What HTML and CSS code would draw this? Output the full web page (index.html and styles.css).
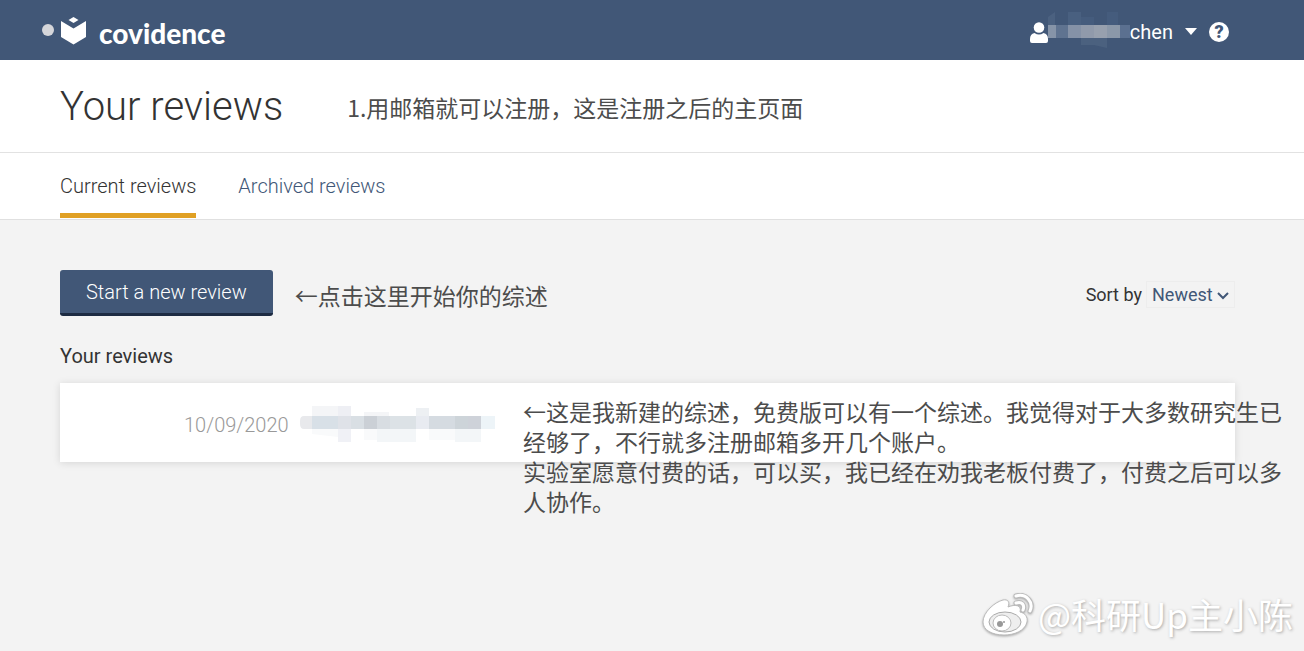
FILE: index.html
```html
<!DOCTYPE html>
<html lang="zh-CN">
<head>
    <meta charset="utf-8">
    <title>Covidence - Your reviews</title>
    <link rel="stylesheet" href="styles.css">
</head>
<body>
    <header class="topbar">
        <a class="brand" href="#">
            <span class="brand-dot"></span>
            <svg class="brand-mark" viewBox="0 0 25 28" width="25" height="28" aria-hidden="true">
                <path d="M12.500 0L17.500 3L12.500 6L7.500 3Z"/>
                <path d="M0 4L12.500 11.500L25 4V20L12.500 27.500L0 20Z"/>
            </svg>
            <span class="brand-name">covidence</span>
        </a>
        <div class="account">
            <button class="account-menu" type="button">
                <svg class="user-icon" viewBox="0 0 18 21" width="18" height="21" aria-hidden="true">
                    <circle cx="9" cy="5.500" r="5.300"/>
                    <path d="M4.500 11Q9 14 13.500 11Q18 12 18 17V19Q18 21 16 21H2Q0 21 0 19V17Q0 12 4.500 11Z"/>
                </svg>
                <svg class="name-mask" viewBox="0 0 82 36" width="82" height="36" aria-hidden="true">
                    <path d="M0 5L7 0V13H0Z" fill="#4b6180"/>
                    <path d="M20 0H33V13H20Z" fill="#496080"/>
                    <path d="M33 5H46V13H33ZM59 0H70V13H59Z" fill="#455c7d"/>
                    <path d="M0 13H8V26H0Z" fill="#8694a8"/>
                    <path d="M8 13H20V26H8Z" fill="#5f7390"/>
                    <path d="M20 13H33V26H20Z" fill="#8592a7"/>
                    <path d="M33 13H46V26H33Z" fill="#909aab"/>
                    <path d="M46 13H59V26H46Z" fill="#97a0ae"/>
                    <path d="M59 13H72V26H59Z" fill="#8b98a9"/>
                    <path d="M72 13H82V26H72Z" fill="#5b7090"/>
                    <path d="M33 26H46V33H33ZM46 26H59V36L46 33Z" fill="#4b617f"/>
                </svg>
                <span>chen</span>
                <svg class="caret" viewBox="0 0 12 8" width="12" height="8" aria-hidden="true"><path d="M0 0H12L6 7Z"/></svg>
            </button>
            <button class="help" type="button" aria-label="Help">?</button>
        </div>
    </header>

    <div class="page-title">
        <h1>Your reviews</h1>
        <p class="note">1.用邮箱就可以注册，这是注册之后的主页面</p>
    </div>

    <nav class="tabs">
        <a class="tab active" href="#">Current reviews</a>
        <a class="tab" href="#">Archived reviews</a>
    </nav>

    <main class="content">
        <div class="toolbar">
            <button class="start-button" type="button">Start a new review</button>
            <p class="note">←点击这里开始你的综述</p>
            <div class="sort">
                <label for="sort">Sort by</label>
                <div class="sort-box">
                    <select id="sort">
                        <option>Newest</option>
                    </select>
                    <svg class="chevron" viewBox="0 0 12 8" width="12" height="8" aria-hidden="true"><path d="M1 1L6 6L11 1"/></svg>
                </div>
            </div>
        </div>

        <h2>Your reviews</h2>
        <article class="review">
            <time datetime="2020-09-10">10/09/2020</time>
            <svg class="title-mask" viewBox="0 0 195 38" width="195" height="38" aria-hidden="true">
                <path d="M12 2H38V12H12ZM64 8H89V12H64Z" fill="#f4f5f7"/>
                <path d="M38 2H51V12H38Z" fill="#eeeff4"/>
                <path d="M116 4H129V12H116Z" fill="#edf0f3"/>
                <path d="M4 12H12V25H4Q0 25 0 20V17Q0 12 4 12Z" fill="#e8e9ec"/>
                <path d="M12 12H38V25H12Z" fill="#d8e0e7"/>
                <path d="M38 12H51V25H38Z" fill="#dfe2e8"/>
                <path d="M51 12H64V25H51Z" fill="#d9dfe4"/>
                <path d="M64 12H77V25H64Z" fill="#cbd0d6"/>
                <path d="M77 12H90V25H77Z" fill="#d8dde2"/>
                <path d="M90 12H116V25H90Z" fill="#dce2e6"/>
                <path d="M116 12H129V25H116Z" fill="#e8ebf1"/>
                <path d="M129 12H155V25H129Z" fill="#d5dbe1"/>
                <path d="M155 12H168V25H155Z" fill="#cdd4d9"/>
                <path d="M168 12H181V25H168Z" fill="#ced2d9"/>
                <path d="M181 12H195V25H181Z" fill="#edf4f8"/>
                <path d="M12 25H38V33L12 30ZM64 25H77V36H64ZM129 25H155V36H129Z" fill="#f9fafb"/>
                <path d="M38 25H51V38H38Z" fill="#f0f1f6"/>
                <path d="M77 25H116V38H77ZM155 25H181V38H155Z" fill="#f3f6f8"/>
            </svg>
            <div class="note review-note">
                <p>←这是我新建的综述，免费版可以有一个综述。我觉得对于大多数研究生已经够了，不行就多注册邮箱多开几个账户。</p>
                <p>实验室愿意付费的话，可以买，我已经在劝我老板付费了，付费之后可以多人协作。</p>
            </div>
        </article>
    </main>

    <div class="watermark">
        <svg class="weibo" viewBox="0 0 52 44" width="52" height="44" aria-hidden="true">
            <path class="weibo-body" d="M1 29C1 19 13 9 21 7C26 6 28 9 26 14C33 11 40 12 38 19C43 20 46 24 45 29C43 38 32 42 22 42C10 42 1 37 1 29Z"/>
            <ellipse class="weibo-eye" cx="23" cy="29" rx="16" ry="10"/>
            <ellipse class="weibo-body" cx="20" cy="30" rx="9" ry="8"/>
            <circle class="weibo-pupil" cx="18" cy="31" r="3"/>
            <circle class="weibo-pupil" cx="22" cy="29" r="1"/>
            <path class="weibo-wave-edge" d="M34 3C44 0 52 9 48 18M34 10C40 8 43 12 41 17"/>
            <path class="weibo-wave" d="M34 3C44 0 52 9 48 18M34 10C40 8 43 12 41 17"/>
        </svg>
        <span>@科研Up主小陈</span>
    </div>
</body>
</html>
```
FILE: styles.css
```css
* { box-sizing: border-box; }
body { margin: 0; min-height: 100vh; background: #f3f3f3; color: #333; font-family: Roboto, "Noto Sans CJK SC", sans-serif; font-size: 18px; }
h1, h2, p { margin: 0; }
a { color: inherit; text-decoration: none; }
button, select { font: inherit; color: inherit; border: none; background: none; padding: 0; cursor: pointer; }
svg { flex: none; }

.topbar { display: flex; justify-content: space-between; align-items: center; height: 60px; padding: 0 75px 0 42px; background: #415777; color: #fff; }
.brand { display: flex; align-items: center; padding-top: 2px; }
.brand-dot { width: 12px; height: 12px; margin: 0 7px 2px 0; border-radius: 50%; background: #d5d6da; }
.brand-mark { fill: #fff; }
.brand-name { margin-left: 13px; padding-top: 4px; font-family: Lato, sans-serif; font-weight: 900; font-size: 28px; line-height: 32px; }
.account { display: flex; align-items: center; gap: 12px; padding-top: 4px; }
.account-menu { display: flex; align-items: center; font-size: 20px; line-height: 24px; }
.user-icon { fill: #fff; }
.name-mask { margin: -8px 0 -4px; }
.caret { fill: #fff; margin-left: 12px; }
.help { width: 20px; height: 20px; border-radius: 50%; background: #fff; color: #415777; font-size: 18px; font-weight: 900; line-height: 20px; text-align: center; }

.note { font-family: "Noto Sans CJK SC", sans-serif; font-size: 23px; font-weight: 400; line-height: 30px; color: #4c4c4c; }

.page-title { display: flex; align-items: center; gap: 64px; padding: 23px 60px 21px; background: #fff; border-bottom: 1px solid #e2e2e2; }
.page-title h1 { font-size: 40px; font-weight: 300; line-height: 48px; }
.tabs { display: flex; gap: 42px; padding: 0 60px 1px; background: #fff; border-bottom: 1px solid #e0e0e0; }
.tab { padding: 21px 0 15px; border-bottom: 5px solid transparent; font-size: 20px; font-weight: 300; line-height: 24px; color: #415777; }
.tab.active { color: #333; border-color: #e0a024; }

.content { padding: 50px 69px 50px 60px; }
.toolbar { display: flex; align-items: center; gap: 22px; }
.start-button { height: 46px; padding: 0 26px; border-radius: 3px; border-bottom: 3px solid #1d2b42; background: #415777; color: #fff; font-size: 20px; font-weight: 300; line-height: 24px; }
.toolbar .note { padding-top: 4px; }
.sort { display: flex; align-items: center; gap: 4px; margin-left: auto; padding-top: 2px; }
.sort-box { position: relative; border: 1px solid #ededed; }
.sort select { display: block; width: 87px; height: 25px; padding-left: 5px; appearance: none; color: #415777; }
.chevron { position: absolute; right: 5px; top: 10px; fill: none; stroke: #415777; stroke-width: 2; pointer-events: none; }

.content h2 { margin: 28px 0 15px; font-size: 20px; font-weight: 400; line-height: 24px; }
.review { position: relative; display: flex; align-items: center; gap: 11px; height: 79px; padding-left: 124px; background: #fff; box-shadow: 0 1px 8px rgba(0, 0, 0, 0.12); }
.review time { padding-top: 5px; font-size: 20px; font-weight: 300; line-height: 24px; color: #999; }
/* runs past the card on purpose */
.review-note { position: absolute; top: 13px; left: 463px; right: -48px; }

.watermark { position: absolute; right: 11px; bottom: 13px; display: flex; align-items: center; gap: 4px; color: #fff; font-family: "Noto Sans CJK SC", sans-serif; font-size: 35px; line-height: 44px; text-shadow: 1px 1px 3px #aaa; }
.watermark span { padding-bottom: 2px; }
.weibo { filter: drop-shadow(0 1px 1px #aaa); }
.weibo-body { fill: #fff; stroke: #bbb; }
.weibo-eye { fill: #eee; stroke: #aaa; }
.weibo-pupil { fill: #999; }
.weibo-wave, .weibo-wave-edge { fill: none; stroke: #fff; stroke-width: 3; stroke-linecap: round; }
.weibo-wave-edge { stroke: #bbb; stroke-width: 5; }
```
